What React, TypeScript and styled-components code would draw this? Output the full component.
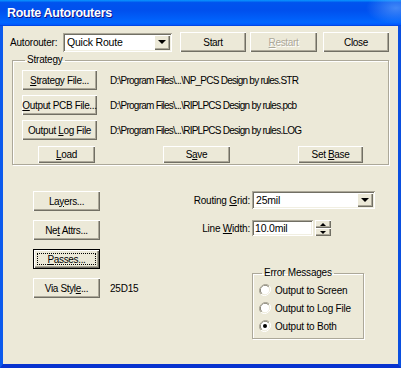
import * as React from 'react';
import styled, { createGlobalStyle } from 'styled-components';

const Global = createGlobalStyle`
  html, body { margin: 0; padding: 0; background: #ffffff; }
  body {
    font-family: "Liberation Sans", Arial, sans-serif;
    font-size: 10px;
    letter-spacing: -0.2px;
    color: #000;
  }
`;

const Window = styled.div`
  width: 401px;
  height: 368px;
  display: flex;
  flex-direction: column;
`;

const TitleBar = styled.div`
  height: 26px;
  flex: none;
  display: flex;
  align-items: center;
  padding-left: 7px;
  background:
    radial-gradient(ellipse 30px 16px at 396px 8px, rgba(120, 180, 255, 0.55), rgba(120, 180, 255, 0) 100%),
    linear-gradient(to bottom, #0997ff 0%, #0053ee 10%, #0050ee 40%, #0066ff 86%, #005bff 94%, #003dd7 100%);
`;

const Title = styled.span`
  color: #fff;
  font-size: 12.5px;
  font-weight: bold;
  letter-spacing: -0.3px;
  text-shadow: 1px 1px #0f1089;
`;

const Frame = styled.div`
  flex: 1;
  display: flex;
  flex-direction: column;
  border-left: 3px solid #0b5aed;
  border-right: 3px solid #0a4fe0;
  border-bottom: 4px solid #0833cf;
  background: #ece9d8;
  padding: 6px 0 0 7px;
`;

const TopRow = styled.div`
  display: flex;
  align-items: center;
  height: 20px;
`;

const Label = styled.span<{ $w?: number; $right?: boolean }>`
  width: ${p => (p.$w ? `${p.$w}px` : 'auto')};
  flex: none;
  text-align: ${p => (p.$right ? 'right' : 'left')};
  white-space: nowrap;
`;

const Btn = styled.button<{ $w: number; $h?: number; $default?: boolean; $disabled?: boolean; $ml?: number }>`
  box-sizing: border-box;
  width: ${p => p.$w}px;
  height: ${p => p.$h ?? 20}px;
  margin: 0 0 0 ${p => p.$ml ?? 0}px;
  padding: 0;
  flex: none;
  position: relative;
  background: #ece9d8;
  border: ${p => (p.$default ? '1px solid #000' : 'none')};
  font: inherit;
  letter-spacing: -0.35px;
  color: ${p => (p.$disabled ? '#aca899' : '#000')};
  text-shadow: ${p => (p.$disabled ? '1px 1px #fff' : 'none')};
  box-shadow: inset 1px 1px #ffffff, inset -1px -1px #716f64, inset -2px -2px #aca899;
  white-space: nowrap;
  &::after {
    content: '';
    display: ${p => (p.$default ? 'block' : 'none')};
    position: absolute;
    inset: 3px;
    border: 1px dotted #000;
  }
`;

const Combo = styled.div<{ $w: number; $h: number }>`
  box-sizing: border-box;
  width: ${p => p.$w}px;
  height: ${p => p.$h}px;
  flex: none;
  display: flex;
  align-items: stretch;
  background: #fff;
  padding: 2px;
  box-shadow: inset 1px 1px #aca899, inset -1px -1px #ffffff, inset 2px 2px #716f64, inset -2px -2px #f1efe2;
`;

const ComboText = styled.span`
  flex: 1;
  display: flex;
  align-items: center;
  padding-left: 2px;
  font-size: 10.5px;
`;

const DropButton = styled.span`
  width: 16px;
  flex: none;
  display: flex;
  align-items: center;
  justify-content: center;
  background: #ece9d8;
  box-shadow: inset 1px 1px #ffffff, inset -1px -1px #716f64, inset -2px -2px #aca899;
`;

const Arrow = styled.span<{ $up?: boolean; $size?: number }>`
  width: 0;
  height: 0;
  border-left: ${p => p.$size ?? 4}px solid transparent;
  border-right: ${p => p.$size ?? 4}px solid transparent;
  ${p => (p.$up ? 'border-bottom' : 'border-top')}: ${p => (p.$size ?? 4)}px solid #000;
`;

const Group = styled.fieldset<{ $w: number }>`
  box-sizing: border-box;
  width: ${p => p.$w}px;
  margin: 0;
  border: 1px solid #aca899;
  box-shadow: 1px 1px #fff, inset 1px 1px #fff;
  & > legend {
    padding: 0 2px;
    margin-left: 3px;
    line-height: 12px;
  }
`;

const Strategy = styled(Group)`
  margin: 2px 0 0 2px;
  padding: 4px 9px 1px 9px;
`;

const FileRow = styled.div`
  display: flex;
  align-items: center;
  gap: 13px;
  height: 20px;
  margin-bottom: 5px;
`;

const FilePath = styled.span`
  letter-spacing: -0.75px;
  white-space: nowrap;
`;

const ActionRow = styled.div`
  display: flex;
  justify-content: space-between;
  padding: 1px 16px 0 16px;
`;

const Lower = styled.div`
  display: flex;
  margin-top: 26px;
  padding-left: 23px;
`;

const LeftCol = styled.div`
  width: 150px;
  flex: none;
  display: flex;
  flex-direction: column;
  gap: 9px;
`;

const ViaRow = styled.div`
  display: flex;
  align-items: center;
  gap: 10px;
`;

const RightCol = styled.div`
  display: flex;
  flex-direction: column;
`;

const FormRow = styled.div<{ $mt?: number }>`
  display: flex;
  align-items: center;
  gap: 2px;
  margin-top: ${p => p.$mt ?? 0}px;
`;

const Edit = styled.div`
  box-sizing: border-box;
  width: 61px;
  height: 16px;
  display: flex;
  align-items: center;
  padding-left: 3px;
  background: #fff;
  font-size: 10.5px;
  box-shadow: inset 1px 1px #aca899, inset -1px -1px #ffffff, inset 2px 2px #716f64, inset -2px -2px #f1efe2;
`;

const Spin = styled.div`
  width: 16px;
  height: 16px;
  display: flex;
  flex-direction: column;
`;

const SpinHalf = styled.span`
  flex: 1;
  display: flex;
  align-items: center;
  justify-content: center;
  background: #ece9d8;
  box-shadow: inset 1px 1px #ffffff, inset -1px -1px #716f64, inset -2px -2px #aca899;
`;

const ErrorGroup = styled(Group)`
  margin: 31px 0 0 69px;
  padding: 2px 6px 3px 6px;
`;

const RadioRow = styled.div`
  display: flex;
  align-items: center;
  gap: 4px;
  height: 18px;
`;

const Radio: React.FC<{ checked?: boolean }> = ({ checked }) => (
  <svg width="12" height="12" viewBox="0 0 12 12">
    <path d="M10.2 1.8 A6 6 0 0 0 1.8 10.2" fill="none" stroke="#aca899" strokeWidth="1" />
    <path d="M9.5 2.5 A5 5 0 0 0 2.5 9.5" fill="none" stroke="#716f64" strokeWidth="1" />
    <path d="M1.8 10.2 A6 6 0 0 0 10.2 1.8" fill="none" stroke="#ffffff" strokeWidth="1" />
    <circle cx="6" cy="6" r="4.2" fill="#fff" />
    {checked && <circle cx="6" cy="6" r="2" fill="#000" />}
  </svg>
);

const paths = [
  { label: <><u>S</u>trategy File...</>, path: 'D:\\Program Files\\...\\NP_PCS Design by rules.STR' },
  { label: <><u>O</u>utput PCB File...</>, path: 'D:\\Program Files\\...\\RIPLPCS Design by rules.pcb' },
  { label: <>Output <u>L</u>og File</>, path: 'D:\\Program Files\\...\\RIPLPCS Design by rules.LOG' },
];

const App: React.FC = () => (
  <>
    <Global />
    <Window>
      <TitleBar>
        <Title>Route Autorouters</Title>
      </TitleBar>
      <Frame>
        <TopRow>
          <Label $w={53}>Autorouter:</Label>
          <Combo $w={109} $h={19}>
            <ComboText>Quick Route</ComboText>
            <DropButton><Arrow /></DropButton>
          </Combo>
          <Btn $w={66} $ml={8}>Start</Btn>
          <Btn $w={67} $ml={4} $disabled><u>R</u>estart</Btn>
          <Btn $w={66} $ml={6}>Close</Btn>
        </TopRow>

        <Strategy $w={377}>
          <legend>Strategy</legend>
          {paths.map((p, i) => (
            <FileRow key={i}>
              <Btn $w={75}>{p.label}</Btn>
              <FilePath>{p.path}</FilePath>
            </FileRow>
          ))}
          <ActionRow>
            <Btn $w={57} $h={17}><u>L</u>oad</Btn>
            <Btn $w={67} $h={17}>S<u>a</u>ve</Btn>
            <Btn $w={65} $h={17}>Set <u>B</u>ase</Btn>
          </ActionRow>
        </Strategy>

        <Lower>
          <LeftCol>
            <Btn $w={67}>La<u>y</u>ers...</Btn>
            <Btn $w={67}>Ne<u>t</u> Attrs...</Btn>
            <Btn $w={67} $default><u>P</u>asses...</Btn>
            <ViaRow>
              <Btn $w={67}>Via Styl<u>e</u>...</Btn>
              <span>25D15</span>
            </ViaRow>
          </LeftCol>
          <RightCol>
            <FormRow>
              <Label $w={67} $right>Routing <u>G</u>rid:</Label>
              <Combo $w={123} $h={18}>
                <ComboText>25mil</ComboText>
                <DropButton><Arrow /></DropButton>
              </Combo>
            </FormRow>
            <FormRow $mt={11}>
              <Label $w={67} $right>Line <u>W</u>idth:</Label>
              <Edit>10.0mil</Edit>
              <Spin>
                <SpinHalf><Arrow $up $size={3} /></SpinHalf>
                <SpinHalf><Arrow $size={3} /></SpinHalf>
              </Spin>
            </FormRow>
            <ErrorGroup $w={112}>
              <legend>Error Messages</legend>
              <RadioRow><Radio /><span>Output to Screen</span></RadioRow>
              <RadioRow><Radio /><span>Output to Log File</span></RadioRow>
              <RadioRow><Radio checked /><span>Output to Both</span></RadioRow>
            </ErrorGroup>
          </RightCol>
        </Lower>
      </Frame>
    </Window>
  </>
);

export default App;
